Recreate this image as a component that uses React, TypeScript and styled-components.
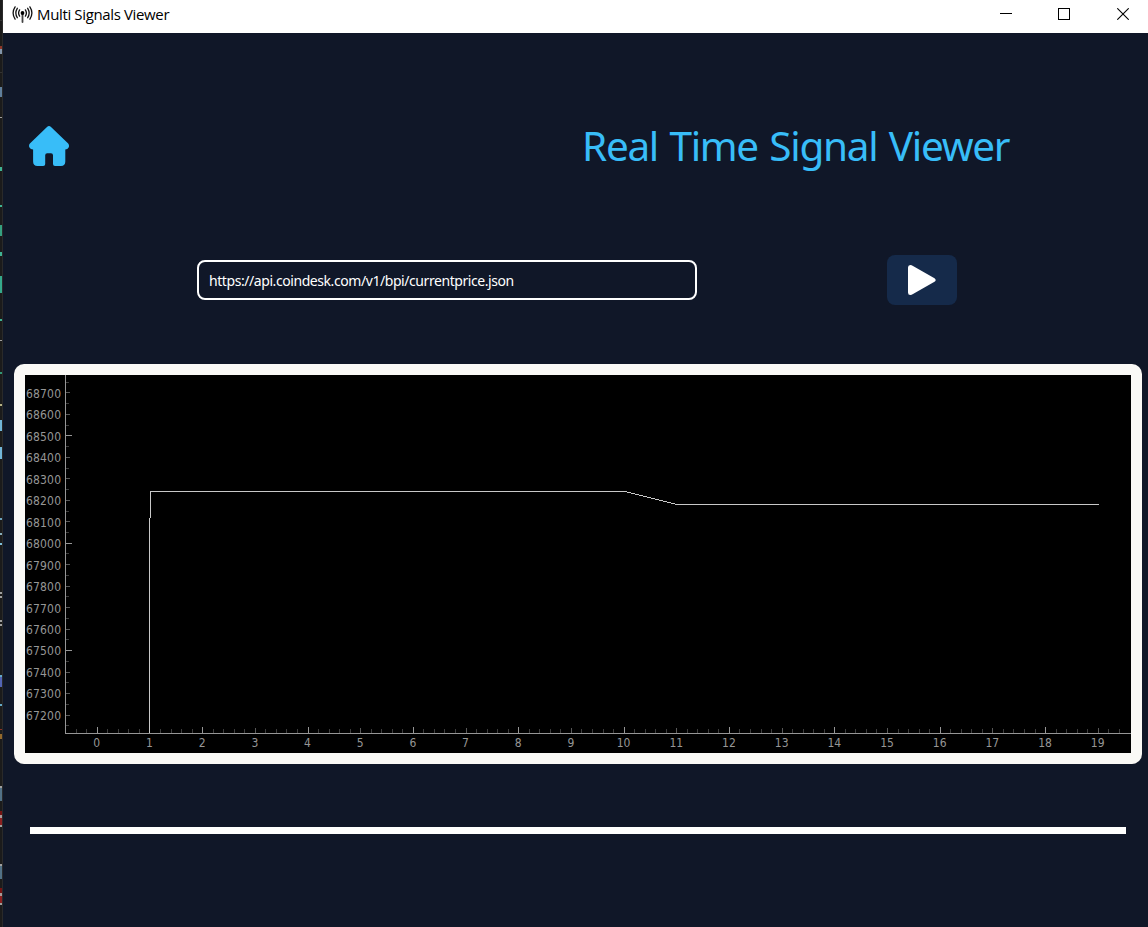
import React from 'react';
import styled, { createGlobalStyle } from 'styled-components';

const GlobalStyle = createGlobalStyle`
  * { box-sizing: border-box; }
  body { margin: 0; background: #1c1c1c; overflow: hidden; }
`;

const uiFont = `'DejaVu Sans Condensed', 'DejaVu Sans', sans-serif`;
const textFont = `'Noto Sans', sans-serif`;

const Desktop = styled.div`
  display: flex;
  width: 1148px;
  height: 927px;
  overflow: hidden;
`;

const EditorEdge = styled.svg`
  flex: none;
  display: block;
  background: #1b1b1b;
`;

const Window = styled.main`
  flex: 1;
  display: flex;
  flex-direction: column;
  background: #101728;
`;

const TitleBar = styled.header`
  display: flex;
  align-items: center;
  height: 33px;
  padding-left: 9px;
  background: #fff;
`;

const AppIcon = styled.svg`
  flex: none;
  margin: -6px 4px 0 0;
`;

const TitleText = styled.span`
  flex: 1;
  margin-top: -6px;
  font: 15px/20px 'Open Sans', sans-serif;
  letter-spacing: -0.36px;
  color: #000;
`;

const WindowButton = styled.button`
  display: flex;
  align-items: center;
  justify-content: center;
  width: 58px;
  height: 33px;
  padding: 0 0 5px;
  border: 0;
  background: none;

  &:last-child { width: 60px; }
`;

const WindowControls = styled.div`
  display: flex;
  margin-right: -5px;
`;

const Header = styled.section`
  display: flex;
  align-items: center;
  justify-content: space-between;
  height: 50px;
  margin-top: 88px;
  padding: 0 140px 0 26px;
`;

const IconButton = styled.button`
  display: flex;
  padding: 0;
  border: 0;
  background: none;
`;

const Heading = styled.h1`
  margin: 0;
  width: 426px;
  font: 400 40.5px/50px ${textFont};
  letter-spacing: -1.3px;
  word-spacing: 2.2px;
  white-space: nowrap;
  color: #38bdf8;
`;

const Controls = styled.section`
  display: flex;
  align-items: center;
  justify-content: space-between;
  height: 50px;
  margin-top: 84px;
  padding: 0 191px 0 194px;
`;

const UrlInput = styled.input`
  width: 500px;
  height: 40px;
  padding: 1px 10px 0;
  border: 2px solid #fff;
  border-radius: 8px;
  outline: 0;
  background: transparent;
  color: #fff;
  font: 14px ${textFont};
  letter-spacing: -0.43px;
`;

const PlayButton = styled.button`
  display: flex;
  align-items: center;
  justify-content: center;
  width: 70px;
  height: 50px;
  padding: 0;
  border: 0;
  border-radius: 8px;
  background: #152a4a;
`;

const ChartFrame = styled.section`
  width: 1128px;
  height: 400px;
  margin: 59px 0 0 11px;
  padding: 11px;
  border-radius: 10px;
  background: #faf9f6;
`;

const Plot = styled.svg`
  display: block;
  background: #000;
`;

const AxisLabel = styled.text`
  font: 12px ${uiFont};
  fill: #969696;
`;

const Divider = styled.hr`
  width: 1096px;
  height: 7px;
  margin: 63px 0 0 27px;
  border: 0;
  background: #fff;
`;

// Slices of code characters at the edge of the window behind: [y, height, colour]
const edgeMarks: [number, number, string][] = [
  [20, 1, '#333333'], [46, 3, '#8c3528'], [49, 5, '#8295aa'], [72, 1, '#333333'],
  [87, 10, '#607f9c'], [117, 1, '#a0a0a0'], [167, 4, '#3fb394'], [205, 2, '#3fb394'],
  [225, 11, '#35a080'], [252, 4, '#3fb394'], [276, 17, '#35a98c'], [319, 2, '#3fb394'],
  [340, 1, '#a0a0a0'], [372, 2, '#329878'], [404, 2, '#b5b286'], [420, 11, '#72b6d9'],
  [447, 12, '#72b6d9'], [518, 2, '#6ca3bd'], [533, 2, '#88aebc'], [543, 2, '#7fc0dd'],
  [592, 2, '#a0a0a0'], [596, 2, '#a0a0a0'], [620, 2, '#a0a0a0'], [624, 2, '#a0a0a0'],
  [675, 2, '#63a9c8'], [677, 10, '#5264b4'], [704, 2, '#63a9c8'], [729, 1, '#8c3528'],
  [734, 5, '#93692d'], [786, 2, '#a0a0a0'], [788, 13, '#527186'], [811, 4, '#751313'],
  [815, 3, '#a99999'], [818, 7, '#8c2020'], [825, 2, '#a0a0a0'], [864, 2, '#a0a0a0'],
  [866, 13, '#527186'], [888, 5, '#751313'], [893, 3, '#a99999'], [896, 7, '#8c2020'],
  [903, 2, '#a0a0a0'],
];

const toX = (v: number) => 72.3 + v * 52.68;
const toY = (v: number) => 60.9 + (68500 - v) * 0.2147;

const xTicks = Array.from({ length: 100 }, (_, i) => i - 2);
const yTicks = Array.from({ length: 33 }, (_, i) => 67150 + i * 50);
const xLabels = Array.from({ length: 20 }, (_, i) => i);
const yLabels = Array.from({ length: 16 }, (_, i) => 67200 + i * 100);

const tickColor = { major: '#969696', mid: '#585858', minor: '#3c3c3c' };

function SignalPlot() {
  return (
    <Plot width="1106" height="378" viewBox="0 0 1106 378">
      <g shapeRendering="crispEdges">
        {yTicks.map((v) => {
          const kind = v % 500 === 0 ? 'major' : v % 100 === 0 ? 'mid' : 'minor';
          const w = { major: 6, mid: 4, minor: 3 }[kind];
          return <rect key={v} x="41" y={Math.floor(toY(v))} width={w} height="1" fill={tickColor[kind]} />;
        })}
        {xTicks.map((i) => {
          const kind = i % 10 === 0 ? 'major' : i % 5 === 0 ? 'mid' : 'minor';
          const h = { major: 6, mid: 5, minor: 4 }[kind];
          return <rect key={i} x={Math.floor(toX(i / 5))} y={358 - h} width="1" height={h} fill={tickColor[kind]} />;
        })}
        <rect x="40" y="0" width="1" height="359" fill="#969696" />
        <rect x="40" y="358" width="1066" height="1" fill="#969696" />
        <path
          d="M124.5 358V142.5M125.5 143V116.5H600L652 129.5H1074"
          fill="none"
          stroke="#c8c8c8"
        />
      </g>
      {yLabels.map((v) => (
        <AxisLabel key={v} x="1" y={Math.round(toY(v) + 4.9)} textLength="35">{v}</AxisLabel>
      ))}
      {xLabels.map((v) => (
        <AxisLabel key={v} x={toX(v) - 0.5} y="372" textAnchor="middle">{v}</AxisLabel>
      ))}
    </Plot>
  );
}

export default function App() {
  return (
    <>
      <GlobalStyle />
      <Desktop>
        <EditorEdge width="3" height="927">
          {edgeMarks.map(([y, h, c]) => (
            <rect key={y} x="0" y={y} width="2" height={h} fill={c} />
          ))}
          <rect x="2" y="0" width="1" height="927" fill="#2a2a2a" />
        </EditorEdge>
        <Window>
          <TitleBar>
            <AppIcon width="21" height="18" viewBox="0 0 21 18" fill="none" stroke="#111" strokeWidth="1.3" strokeLinecap="round">
              <path d="M10.5 8V17" strokeWidth="1.8" stroke="#444" />
              <circle cx="10.5" cy="8" r="1.9" fill="#000" stroke="none" />
              <path d="M7.6 4.9Q5.6 8 7.6 11.1M5.3 3.3Q2.4 8 5.3 12.7M3.1 1.9Q-.9 8 3.1 14.1" />
              <path d="M13.4 4.9Q15.4 8 13.4 11.1M15.7 3.3Q18.6 8 15.7 12.7M17.9 1.9Q21.9 8 17.9 14.1" />
            </AppIcon>
            <TitleText>Multi Signals Viewer</TitleText>
            <WindowControls>
              <WindowButton aria-label="Minimize">
                <svg width="12" height="12"><rect y="5" width="12" height="1" /></svg>
              </WindowButton>
              <WindowButton aria-label="Maximize">
                <svg width="12" height="12"><rect x=".5" y=".5" width="11" height="11" fill="none" stroke="#000" /></svg>
              </WindowButton>
              <WindowButton aria-label="Close">
                <svg width="12" height="12"><path d="M.3 .3L11.7 11.7M11.7 .3L.3 11.7" stroke="#000" strokeWidth="1.1" /></svg>
              </WindowButton>
            </WindowControls>
          </TitleBar>
          <Header>
            <IconButton aria-label="Home">
              <svg width="40" height="40" viewBox="0 0 40 40" fill="#38bdf8">
                <path d="M18 .9Q20 -.9 22 .9L39.2 17.6Q40.6 19.3 39.6 21.6Q38.6 23.6 36.3 23.6V35.6Q36.3 40 32 40H26Q24 40 24 38V29.2Q24 27.2 22 27.2H18.2Q16.2 27.2 16.2 29.2V38Q16.2 40 14.2 40H8.4Q4.1 40 4.1 35.6V23.6Q1.6 23.6 .5 21.6Q-.6 19.3 .9 17.6Z" />
              </svg>
            </IconButton>
            <Heading>Real Time Signal Viewer</Heading>
          </Header>
          <Controls>
            <UrlInput readOnly defaultValue="https://api.coindesk.com/v1/bpi/currentprice.json" />
            <PlayButton aria-label="Play">
              <svg width="28" height="30" viewBox="0 0 28 30" fill="#fff">
                <path d="M0 2.5Q0 0 2.3 0Q3.6 0 5 .9L26.5 13.2Q28.9 15 26.5 16.8L5 29.1Q3.6 30 2.3 30Q0 30 0 27.5Z" />
              </svg>
            </PlayButton>
          </Controls>
          <ChartFrame>
            <SignalPlot />
          </ChartFrame>
          <Divider />
        </Window>
      </Desktop>
    </>
  );
}
